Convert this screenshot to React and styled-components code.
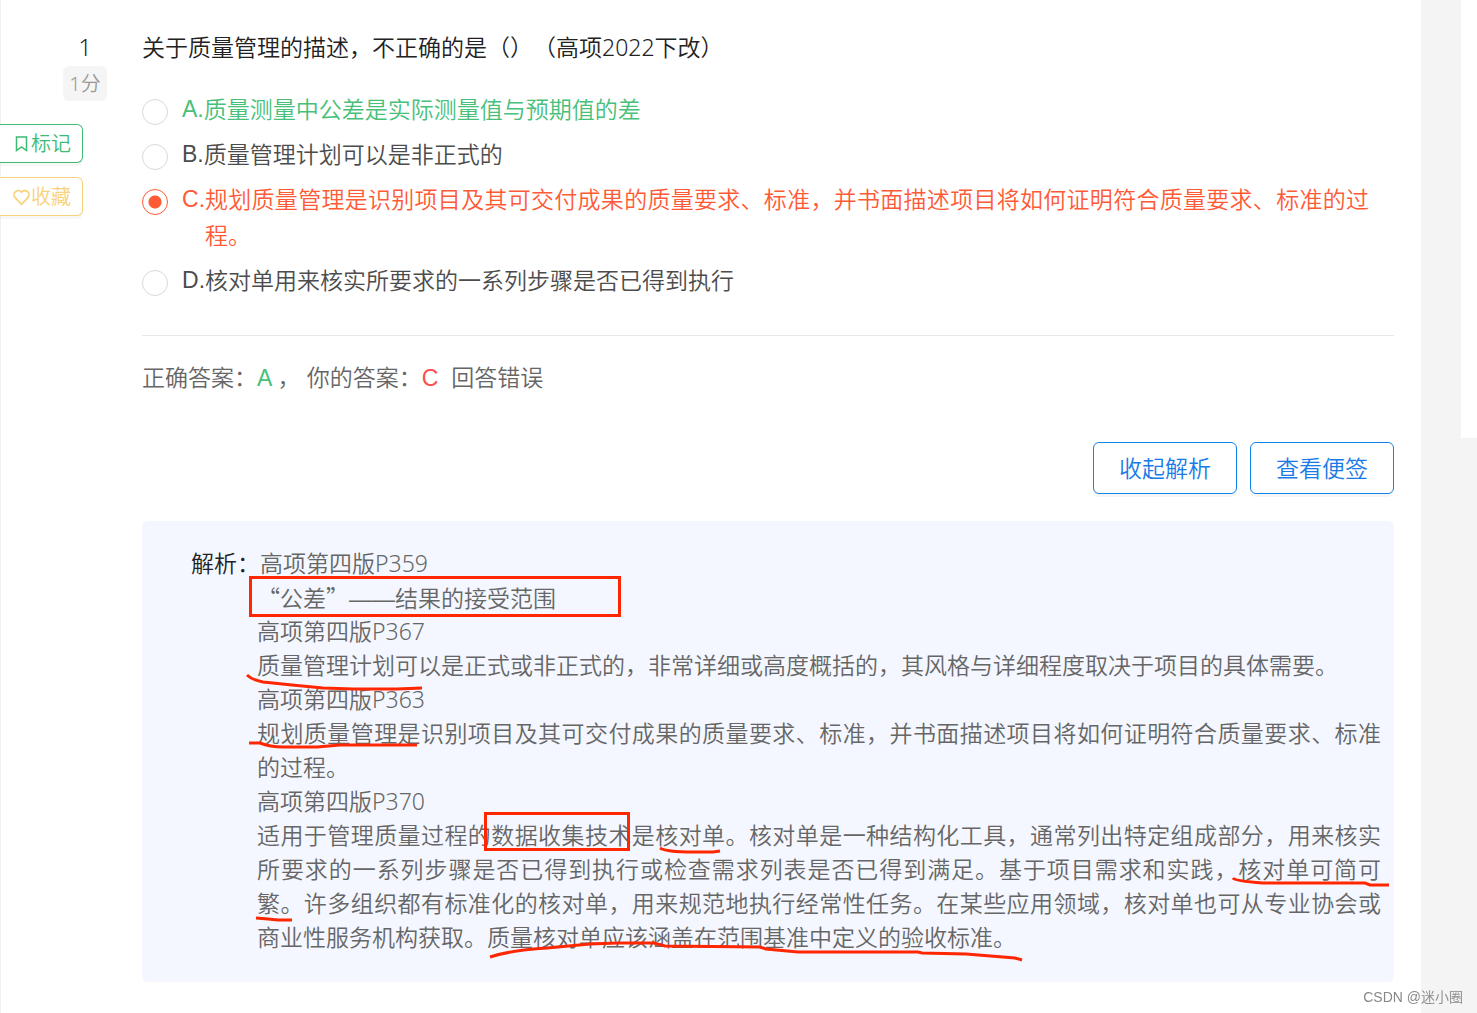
import React, {useState} from 'react';
import styled, {createGlobalStyle} from 'styled-components';

const GlobalStyle = createGlobalStyle`
  * {
    box-sizing: border-box;
  }
  body {
    margin: 0;
    background: #f4f4f4;
    color: #222;
    font-family: 'Noto Sans', 'Noto Sans CJK SC', sans-serif;
    font-size: 23px;
    font-weight: 350;
    line-height: 36px;
    text-spacing-trim: space-all;
  }
  p {
    margin: 0;
  }
`;

const Page = styled.div`
  display: flex;
  align-items: flex-start;
  min-height: 100vh;
`;

const Paper = styled.main`
  flex: 1;
  display: flex;
  min-height: 100vh;
  padding: 29px 27px 31px 0;
  background: #fff;
  border-left: 1px solid #f0f0f0;
`;

const SidePanel = styled.aside`
  width: 16px;
  height: 438px;
  margin-left: 40px;
  background: #fff;
`;

const Rail = styled.div`
  flex: none;
  width: 141px;
  display: flex;
  flex-direction: column;
  align-items: flex-start;
`;

const Score = styled.div`
  width: 44px;
  margin-left: 62px;
  margin-bottom: 23px;
  text-align: center;
`;

const Points = styled.div`
  height: 35px;
  margin-top: 1px;
  border-radius: 6px;
  background: #f5f5f5;
  color: #999;
  font-size: 20px;
  line-height: 35px;
`;

const RailButton = styled.button`
  display: flex;
  align-items: center;
  justify-content: flex-end;
  width: 83px;
  height: 39px;
  margin: 0 0 14px -1px;
  padding: 0 11px 0 0;
  border: 1px solid ${props => props.$color};
  border-left: 0;
  border-radius: 0 6px 6px 0;
  background: #fff;
  box-shadow: 0 3px 0 rgba(0, 0, 0, 0.03);
  color: ${props => props.$color};
  font: inherit;
  font-size: 20px;
  line-height: 36px;
  cursor: pointer;
`;

const Content = styled.section`
  flex: 1;
  min-width: 0;
`;

const Options = styled.fieldset`
  display: flex;
  flex-direction: column;
  gap: 9px;
  margin: 0;
  padding: 0 25px 37px 0;
  border: 0;
`;

const Question = styled.legend`
  padding: 0;
  margin-bottom: 26px;
`;

const Option = styled.label`
  display: flex;
  align-items: flex-start;
  color: ${props => props.$color};
  cursor: pointer;
`;

const Radio = styled.input`
  appearance: none;
  flex: none;
  width: 26px;
  height: 26px;
  margin: 8px 14px 0 0;
  border: 1px solid #d9d9d9;
  border-radius: 50%;
  background: #fff;

  &:checked {
    border-color: #ff5a36;
    background: radial-gradient(circle, #ff5a36 6px, #fff 7px);
  }
`;

const Letter = styled.span`
  font-family: 'Liberation Sans', 'Noto Sans CJK SC', sans-serif;
  color: ${props => props.$color || 'inherit'};
`;

const OptionText = styled.span`
  text-align: justify;
`;

const Result = styled.p`
  padding-top: 24px;
  border-top: 1px solid #e8e8e8;
  color: #666;
  font-family: 'Liberation Sans', 'Noto Sans CJK SC', sans-serif;
  white-space: pre-wrap;
`;

const Actions = styled.div`
  display: flex;
  justify-content: flex-end;
  gap: 13px;
  margin: 46px 0 27px;
`;

const ActionButton = styled.button`
  width: 144px;
  height: 52px;
  padding: 0;
  border: 1px solid #1283e8;
  border-radius: 6px;
  background: #fff;
  box-shadow: 0 3px 0 rgba(0, 0, 0, 0.04);
  color: #1a7be6;
  font: inherit;
  cursor: pointer;
`;

const Analysis = styled.article`
  position: relative;
  padding: 25px 13px 28px 115px;
  border-radius: 6px;
  background: #f4f7ff;
  color: #666;
  line-height: 34px;
  text-align: justify;
`;

const FirstLine = styled.p`
  text-indent: -66px;
`;

const Label = styled.span`
  color: #222;
`;

const QuoteLine = styled.p`
  font-family: 'Noto Sans CJK SC', sans-serif;
`;

const Dash = styled.span`
  font-family: 'Liberation Sans', sans-serif;
  line-height: 1;
`;

const Marks = styled.svg`
  position: absolute;
  top: 0;
  left: 0;
  width: 100%;
  height: 100%;
  overflow: visible;
  pointer-events: none;
  fill: none;
  stroke: #ff2600;
  stroke-width: 3;
`;

const Watermark = styled.div`
  position: fixed;
  right: 14px;
  bottom: 6px;
  color: #888;
  font-family: 'Liberation Sans', 'Noto Sans CJK SC', sans-serif;
  font-size: 14px;
  line-height: 20px;
`;

const GREEN = '#47c07a';
const RED = '#ff5a36';

const options = [
  {key: 'A', text: '质量测量中公差是实际测量值与预期值的差', color: GREEN},
  {key: 'B', text: '质量管理计划可以是非正式的', color: '#4c4c4c'},
  {
    key: 'C',
    text: '规划质量管理是识别项目及其可交付成果的质量要求、标准，并书面描述项目将如何证明符合质量要求、标准的过程。',
    color: RED,
  },
  {key: 'D', text: '核对单用来核实所要求的一系列步骤是否已得到执行', color: '#4c4c4c'},
];

function App() {
  const [picked, setPicked] = useState('C');

  return (
    <>
      <GlobalStyle />
      <Page>
        <Paper>
          <Rail>
            <Score>
              1<Points>1分</Points>
            </Score>
            <RailButton type='button' $color='#3dbb72'>
              <svg width='18' height='18' viewBox='0 0 18 18' fill='none' stroke='currentColor' strokeWidth='1.5'>
                <path d='M3.5 2h10v13.5l-5-3.5-5 3.5z' />
              </svg>
              标记
            </RailButton>
            <RailButton type='button' $color='#f8d27a'>
              <svg width='18' height='18' viewBox='0 0 18 18' fill='none' stroke='currentColor' strokeWidth='1.7'>
                <path d='M8.5 16.3 1.9 9.4A4.2 4.2 0 0 1 8.5 4.2a4.2 4.2 0 0 1 6.6 5.2z' />
              </svg>
              收藏
            </RailButton>
          </Rail>
          <Content>
            <Options>
              <Question>关于质量管理的描述，不正确的是（）（高项2022下改）</Question>
              {options.map(option => (
                <Option key={option.key} $color={option.color}>
                  <Radio
                    type='radio'
                    name='answer'
                    value={option.key}
                    checked={picked === option.key}
                    onChange={() => setPicked(option.key)}
                  />
                  <Letter>{option.key}.</Letter>
                  <OptionText>{option.text}</OptionText>
                </Option>
              ))}
            </Options>
            <Result>
              正确答案：<Letter $color={GREEN}>A</Letter> ， 你的答案：<Letter $color='#ff4d4f'>C</Letter>
              {'  '}回答错误
            </Result>
            <Actions>
              <ActionButton type='button'>收起解析</ActionButton>
              <ActionButton type='button'>查看便签</ActionButton>
            </Actions>
            <Analysis>
              <FirstLine>
                <Label>解析：</Label>高项第四版P359
              </FirstLine>
              <QuoteLine>
                “公差”<Dash>——</Dash>结果的接受范围
              </QuoteLine>
              <p>高项第四版P367</p>
              <p>质量管理计划可以是正式或非正式的，非常详细或高度概括的，其风格与详细程度取决于项目的具体需要。</p>
              <p>高项第四版P363</p>
              <p>规划质量管理是识别项目及其可交付成果的质量要求、标准，并书面描述项目将如何证明符合质量要求、标准的过程。</p>
              <p>高项第四版P370</p>
              <p>
                适用于管理质量过程的数据收集技术是核对单。核对单是一种结构化工具，通常列出特定组成部分，用来核实所要求的一系列步骤是否已得到执行或检查需求列表是否已得到满足。基于项目需求和实践，核对单可简可繁。许多组织都有标准化的核对单，用来规范地执行经常性任务。在某些应用领域，核对单也可从专业协会或商业性服务机构获取。质量核对单应该涵盖在范围基准中定义的验收标准。
              </p>
              <Marks aria-hidden='true'>
                <rect x='108.5' y='56.5' width='369' height='38' />
                <rect x='343.5' y='292.5' width='143' height='36' />
                <path d='M105 154 Q110 159 121 161L150 164 181 167 211 168H255L280 167' />
                <path d='M107 222H118Q128 226 141 226H175L198 224H275' />
                <path d='M518 327Q524 331 551 331H571L578 330' />
                <path d='M1091 357Q1093 360 1121 362H1223L1228 364H1247' />
                <path d='M114 397L126 398 136 399H150' />
                <path d='M348 436Q370 429 405 427L448 423 476 422H512L523 425 618 426 624 428 656 431H776L780 432 824 433 873 437 880 439' />
              </Marks>
            </Analysis>
          </Content>
        </Paper>
        <SidePanel />
      </Page>
      <Watermark>CSDN @迷小圈</Watermark>
    </>
  );
}

export default App;
